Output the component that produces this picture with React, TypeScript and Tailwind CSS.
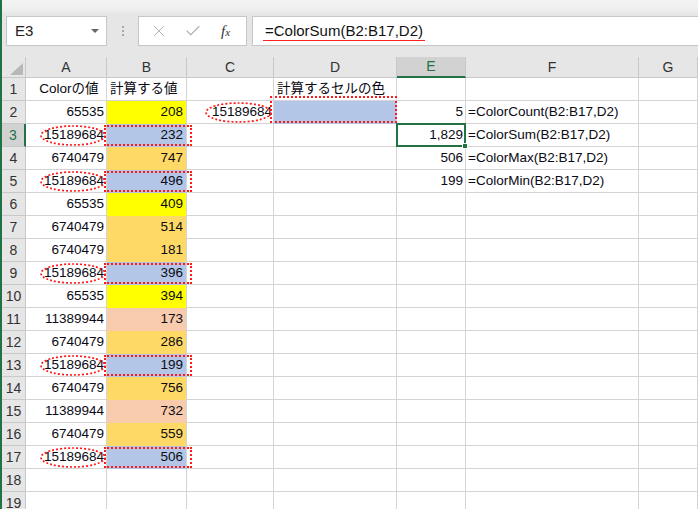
import { X, Check } from 'lucide-react';

const YELLOW = 'bg-[#ffff00] border-b-[#ffff00]';
const ORANGE = 'bg-[#ffd966] border-b-[#ffd966]';
const PEACH = 'bg-[#f8cbad] border-b-[#f8cbad]';
const BLUE = 'bg-[#b4c6e7] border-b-[#b4c6e7]';

const rows = [
  { a: '65535', b: '208', fill: YELLOW },
  { a: '15189684', b: '232', fill: BLUE, mark: true },
  { a: '6740479', b: '747', fill: ORANGE },
  { a: '15189684', b: '496', fill: BLUE, mark: true },
  { a: '65535', b: '409', fill: YELLOW },
  { a: '6740479', b: '514', fill: ORANGE },
  { a: '6740479', b: '181', fill: ORANGE },
  { a: '15189684', b: '396', fill: BLUE, mark: true },
  { a: '65535', b: '394', fill: YELLOW },
  { a: '11389944', b: '173', fill: PEACH },
  { a: '6740479', b: '286', fill: ORANGE },
  { a: '15189684', b: '199', fill: BLUE, mark: true },
  { a: '6740479', b: '756', fill: ORANGE },
  { a: '11389944', b: '732', fill: PEACH },
  { a: '6740479', b: '559', fill: ORANGE },
  { a: '15189684', b: '506', fill: BLUE, mark: true },
];

const results: Record<number, [string, string]> = {
  2: ['5', '=ColorCount(B2:B17,D2)'],
  3: ['1,829', '=ColorSum(B2:B17,D2)'],
  4: ['506', '=ColorMax(B2:B17,D2)'],
  5: ['199', '=ColorMin(B2:B17,D2)'],
};

const cols = ['A', 'B', 'C', 'D', 'E', 'F', 'G'];

function Ellipse({ className }: { className: string }) {
  return (
    <svg className={`absolute pointer-events-none z-10 overflow-visible ${className}`} viewBox="0 0 66 21" preserveAspectRatio="none">
      <ellipse cx="33" cy="10.5" rx="32" ry="9.5" fill="none" stroke="#ff1a1a" strokeWidth="1.7" strokeDasharray="2 2" />
    </svg>
  );
}

function DotBox({ className }: { className: string }) {
  return <div className={`absolute pointer-events-none z-10 border-2 border-dotted border-[#ff1a1a] ${className}`} />;
}

const cell = 'relative h-[23px] border-r border-b border-[#d4d4d4] flex items-center text-[13.5px] text-[#0a0a14] whitespace-nowrap';

export default function App() {
  const all = [{ a: '', b: '', fill: '' }, ...rows, { a: '', b: '', fill: '' }, { a: '', b: '', fill: '' }];

  return (
    <div className="w-[698px] h-[509px] overflow-hidden bg-[#e6e6e6] border-l-2 border-[#217346] font-['Liberation_Sans','Noto_Sans_CJK_JP',sans-serif]">
      {/* ribbon edge */}
      <div className="h-[16px] bg-gradient-to-b from-[#f3f3f3] via-[#f0f0f0] to-[#e4e4e4]" />

      {/* formula bar */}
      <div className="h-[30px] flex items-stretch">
        <div className="ml-[4px] w-[101px] bg-white border border-[#c6c6c6] flex items-center pl-[8px] pr-[7px] text-[15px] text-[#222]">
          E3
          <span className="ml-auto w-0 h-0 border-l-[4px] border-r-[4px] border-t-[4px] border-l-transparent border-r-transparent border-t-[#666]" />
        </div>
        <div className="w-[31px] flex flex-col items-center justify-center gap-[2px]">
          <span className="w-[2px] h-[2px] bg-[#a8a8a8]" />
          <span className="w-[2px] h-[2px] bg-[#a8a8a8]" />
          <span className="w-[2px] h-[2px] bg-[#a8a8a8]" />
        </div>
        <div className="w-[109px] bg-white border border-[#c6c6c6] flex items-center pl-[11px] gap-[16px]">
          <X size={18} strokeWidth={1.3} className="text-[#b3b3b3]" />
          <Check size={18} strokeWidth={1.6} className="text-[#b3b3b3]" />
          <span className="ml-[3px] font-['Liberation_Serif',serif] italic text-[15px] text-[#333] leading-none">
            f<span className="text-[11px]">x</span>
          </span>
        </div>
        <div className="ml-[5px] flex-1 bg-white border border-r-0 border-[#c6c6c6] flex items-center pl-[10px]">
          <span className="text-[15px] text-[#111] leading-[18px] px-[2px] border-b-[1.5px] border-[#ff2020]">=ColorSum(B2:B17,D2)</span>
        </div>
      </div>

      <div className="h-[11px]" />

      {/* sheet */}
      <div className="grid grid-cols-[24px_81px_80px_87px_123px_69px_173px_1fr] bg-white">
        {/* column headers */}
        <div className="h-[21px] bg-[#e6e6e6] border-r border-b border-[#c8c8c8] relative">
          <svg className="absolute left-[8px] top-[6px]" width="13" height="12" viewBox="0 0 13 12">
            <polygon points="13,0 13,12 0,12" fill="#b7b7b7" />
          </svg>
        </div>
        {cols.map((c) => (
          <div
            key={c}
            className={`h-[21px] border-r border-[#c8c8c8] flex items-center justify-center text-[14px] ${
              c === 'E'
                ? 'bg-[#d2d2d2] text-[#217346] border-b-2 border-b-[#217346]'
                : 'bg-[#e6e6e6] text-[#333] border-b border-b-[#c8c8c8]'
            }`}
          >
            {c}
          </div>
        ))}

        {all.map((r, i) => {
          const n = i + 1;
          const res = results[n];
          return (
            <div key={n} className="contents">
              <div
                className={`h-[23px] border-b flex items-center justify-center text-[14px] ${
                  n === 3
                    ? 'bg-[#d2d2d2] text-[#217346] border-r-2 border-r-[#217346] border-b-[#c8c8c8]'
                    : 'bg-[#e6e6e6] text-[#333] border-r border-[#c8c8c8]'
                }`}
              >
                {n}
              </div>

              {/* A */}
              <div className={`${cell} ${n === 1 ? 'justify-center pl-[6px]' : 'justify-end pr-[2px]'}`}>
                {n === 1 ? 'Colorの値' : r.a}
                {r.mark && <Ellipse className="left-[14px] top-[1px] w-[66px] h-[21px]" />}
              </div>

              {/* B */}
              <div className={`${cell} ${n === 1 ? 'justify-start pl-[3px]' : 'justify-end pr-[3px]'} ${r.fill}`}>
                {n === 1 ? '計算する値' : r.b}
                {r.mark && <DotBox className="-left-[3px] top-[1px] w-[88px] h-[21px]" />}
              </div>

              {/* C */}
              <div className={`${cell} justify-end pr-[1px]`}>
                {n === 2 ? '15189684' : ''}
                {n === 2 && <Ellipse className="left-[18px] top-[1px] w-[67px] h-[21px]" />}
              </div>

              {/* D */}
              <div className={`${cell} justify-start pl-[3px] ${n === 2 ? BLUE : ''}`}>
                {n === 1 ? '計算するセルの色' : ''}
                {n === 2 && <DotBox className="-left-[4px] -top-[5px] w-[127px] h-[27px]" />}
              </div>

              {/* E */}
              <div className={`${cell} justify-end pr-[2px]`}>
                {res ? res[0] : ''}
                {n === 3 && (
                  <div className="absolute -left-[1px] -top-[1px] -right-[1px] -bottom-[1px] border-2 border-[#217346] z-20">
                    <span className="absolute -right-[4px] -bottom-[4px] w-[6px] h-[6px] bg-[#217346] border border-white" />
                  </div>
                )}
              </div>

              {/* F */}
              <div className={`${cell} justify-start pl-[2px]`}>{res ? res[1] : ''}</div>

              {/* G */}
              <div className={cell} />
            </div>
          );
        })}
      </div>
    </div>
  );
}
